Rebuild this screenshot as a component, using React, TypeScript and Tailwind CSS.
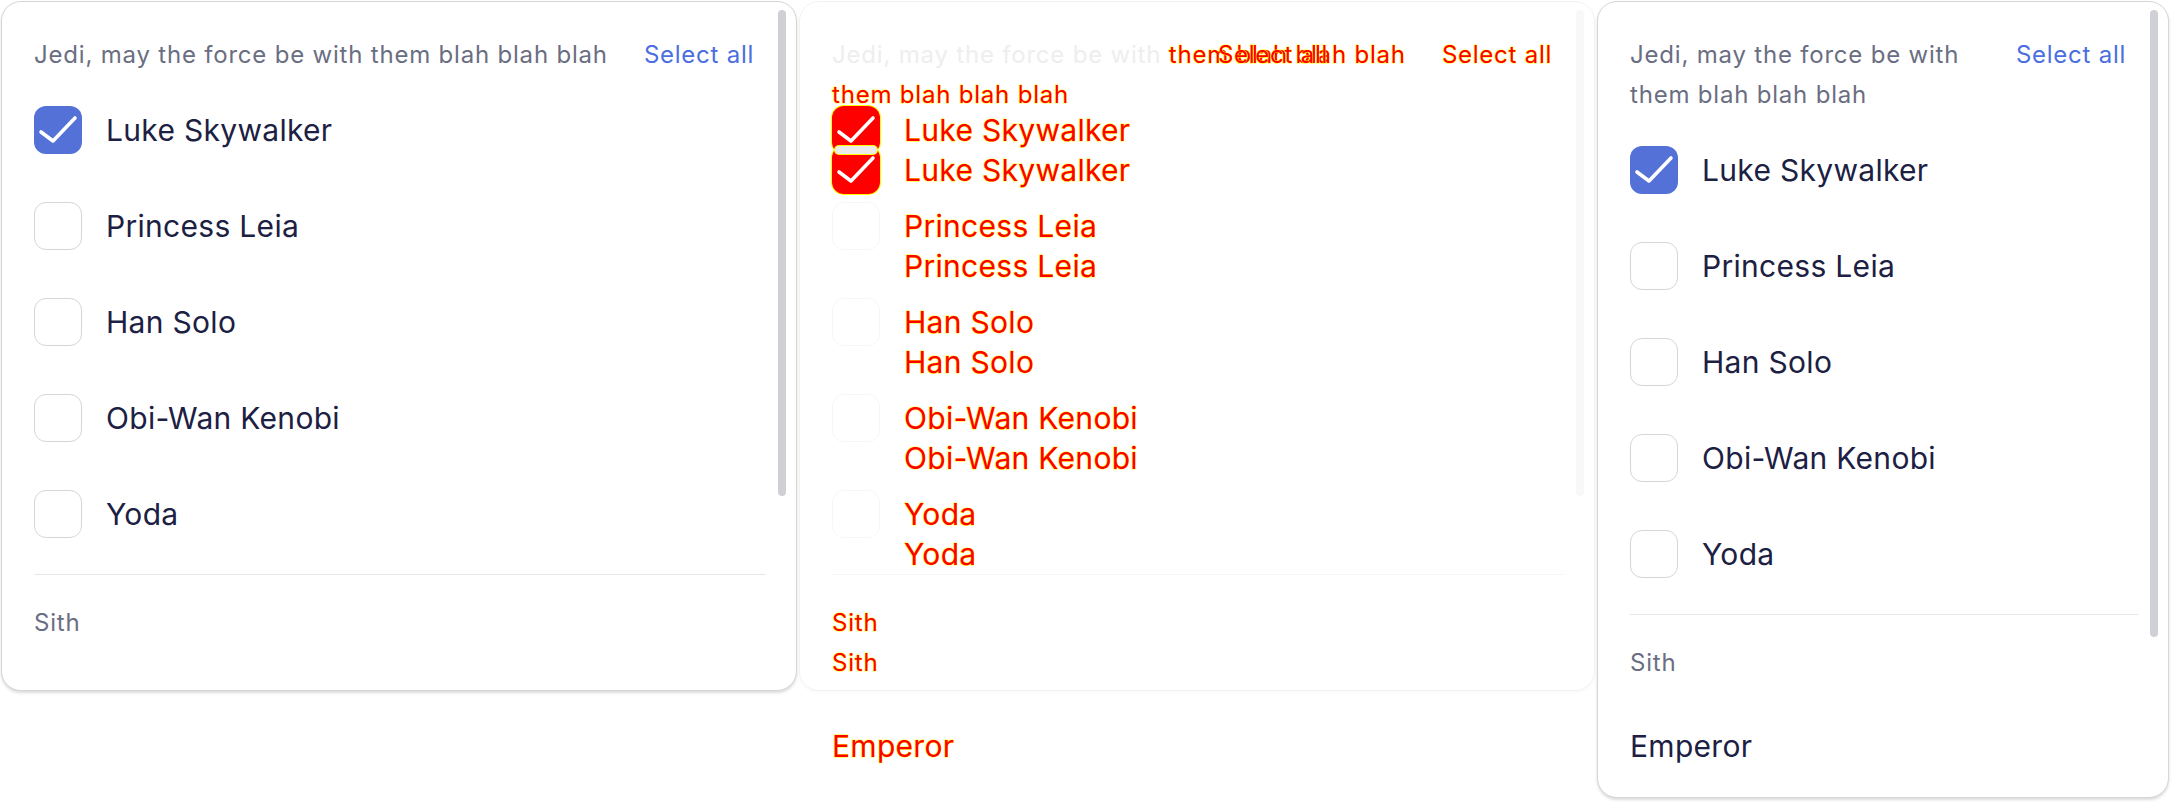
import React from 'react';

type Mode = 'plain' | 'base' | 'actual';

const RED = "text-[#ff0000] [-webkit-text-stroke:0.9px_#ffff00] [paint-order:stroke_fill]";

function pick(mode: Mode, plain: string, base: string, actual: string) {
  return mode === 'plain' ? plain : mode === 'base' ? base : actual;
}

const items = ['Luke Skywalker', 'Princess Leia', 'Han Solo', 'Obi-Wan Kenobi', 'Yoda'];

function Check() {
  return (
    <svg viewBox="0 0 48 48" className="absolute inset-0 w-12 h-12" fill="none">
      <path d="M7 26 L19 35 L41 12" stroke="white" strokeWidth="3.6" strokeLinecap="round" strokeLinejoin="round" />
    </svg>
  );
}

function Box({ checked, mode }: { checked: boolean; mode: Mode }) {
  if (checked) {
    return (
      <div
        className={`relative w-12 h-12 shrink-0 rounded-[12px] ${pick(
          mode,
          'bg-[#5371d6]',
          'bg-[#ff0000] shadow-[0_0_0_1px_#ffff00]',
          'bg-[#ff0000] shadow-[0_0_0_1px_#ffff00]'
        )}`}
      >
        <Check />
        {mode === 'actual' && (
          <div className="absolute left-[3px] top-0 w-[42px] h-[8px] rounded-full bg-[#ececec] shadow-[0_0_0_1px_#ffff00]" />
        )}
      </div>
    );
  }
  return (
    <div
      className={`w-12 h-12 shrink-0 rounded-[12px] border-[1.5px] ${pick(
        mode,
        'border-[#d6d6da]',
        'border-[#f6f6f6]',
        'border-transparent'
      )}`}
    />
  );
}

function Card({ mode, size, thumb, tall }: { mode: Mode; size: string; thumb: string; tall: boolean }) {
  const same = pick(mode, 'text-[#6a6e82]', 'text-[#eeeeee]', 'text-transparent');
  const diffHeader = pick(mode, 'text-[#6a6e82]', RED, RED);
  const select = pick(mode, 'text-[#4b6ee0]', RED, RED);
  const label = pick(mode, 'text-[#1c2042]', RED, RED);
  const sith = pick(mode, 'text-[#6a6e82]', RED, RED);
  const divider = pick(mode, 'bg-[#e6e6e9]', 'bg-[#f5f5f5]', 'bg-transparent');
  return (
    <div
      className={`relative overflow-hidden rounded-[20px] border ${size} ${pick(
        mode,
        'border-[#d6d6d6] bg-white shadow-[0_2px_3px_rgba(0,0,0,0.14)]',
        'border-[#f3f3f3] bg-white shadow-[0_2px_3px_rgba(0,0,0,0.025)]',
        'border-transparent'
      )}`}
    >
      <div className="pt-[33px] pl-[32px] pr-[30px]">
        <div className="flex items-start">
          <p className="flex-1 min-w-0 text-[24px] leading-[40px] tracking-[0.8px]">
            <span className={same}>Jedi, may the force be with </span>
            <span className={diffHeader}>them blah blah blah</span>
          </p>
          <button className={`shrink-0 px-3 text-[24px] leading-[40px] tracking-[0.75px] ${select}`}>Select all</button>
        </div>
        <div className="mt-[31px] flex flex-col gap-12">
          {items.map((name, i) => (
            <div key={name} className="flex items-center gap-6 h-12">
              <Box checked={i === 0} mode={mode} />
              <span className={`text-[30px] leading-[48px] tracking-[0.3px] whitespace-nowrap ${label}`}>{name}</span>
            </div>
          ))}
        </div>
        <div className={`mt-9 h-px ${divider}`} />
        <p className={`mt-7 text-[24px] leading-[40px] tracking-[0.8px] ${sith}`}>Sith</p>
        {tall && (
          <p className={`mt-[39px] text-[30px] leading-[48px] tracking-[0.3px] ${label}`}>Emperor</p>
        )}
      </div>
      {mode !== 'actual' && (
        <div
          className={`absolute right-[10px] top-[8px] w-2 rounded-full ${thumb} ${pick(
            mode,
            'bg-[#cfd0d5]',
            'bg-[#f8f8f9]',
            'bg-transparent'
          )}`}
        />
      )}
    </div>
  );
}

export default function App() {
  return (
    <div className="flex items-start w-[2172px] h-[802px] bg-white font-['Inter',sans-serif] overflow-hidden">
      <div className="w-[798px] shrink-0 p-px">
        <Card mode="plain" size="w-[796px] h-[690px]" thumb="h-[486px]" tall={false} />
      </div>
      <div className="relative w-[798px] h-[802px] shrink-0 p-px">
        <Card mode="base" size="w-[796px] h-[690px]" thumb="h-[486px]" tall={false} />
        <div className="absolute left-px top-px">
          <Card mode="actual" size="w-[572px] h-[797px]" thumb="h-[627px]" tall={true} />
        </div>
      </div>
      <div className="w-[576px] shrink-0 p-px">
        <Card mode="plain" size="w-[572px] h-[797px]" thumb="h-[627px]" tall={true} />
      </div>
    </div>
  );
}
